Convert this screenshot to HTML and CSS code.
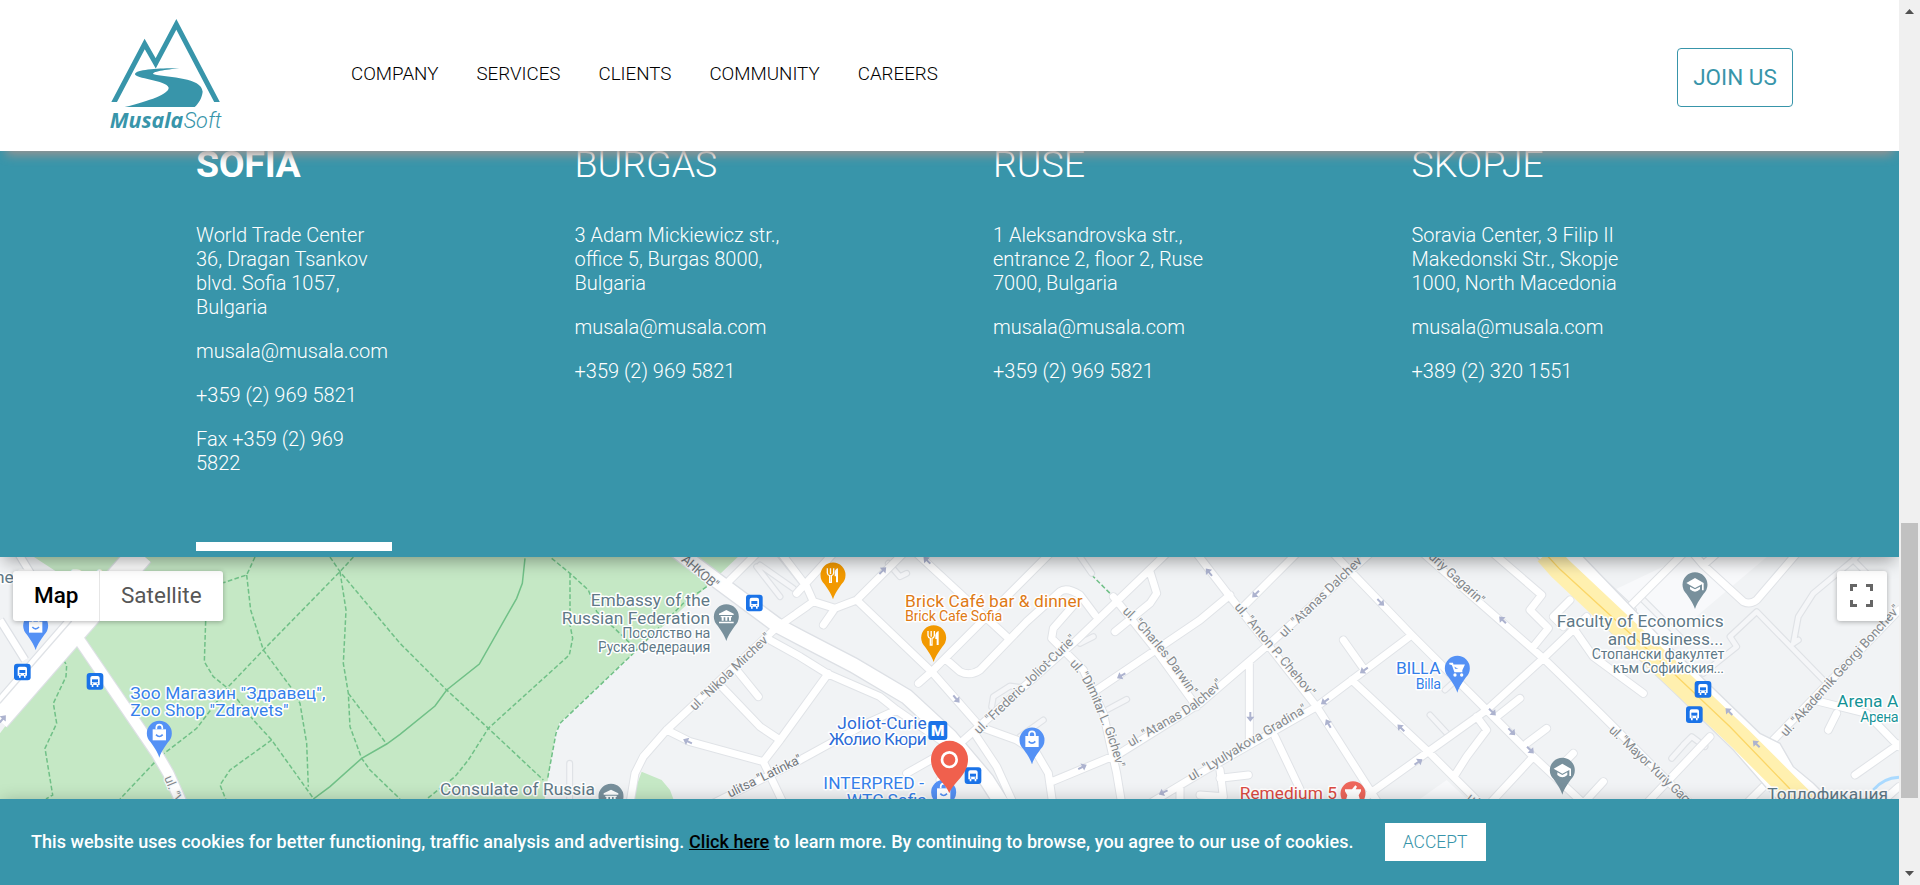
FILE: index.html
```html
<!DOCTYPE html>
<html lang="en">
<head>
<meta charset="utf-8">
<title>Musala Soft</title>
<link rel="stylesheet" href="styles.css">
</head>
<body>
<div class="page">
  <header class="header">
    <svg class="logo" viewBox="324 48 348 348" role="img" aria-label="MusalaSoft">
      <clipPath id="base"><rect x="324" y="48" width="348" height="258"/></clipPath>
      <path d="M334 322L434 132L467 190L529 73L661 325" fill="none" stroke="#3895aa" stroke-width="15" stroke-miterlimit="6" clip-path="url(#base)"/>
      <path d="M538 205C480 204 409 208 405 222C402 236 500 240 506 263C506 282 450 302 374 321H584C596 310 606 294 608 275C604 232 510 234 461 223C450 216 500 209 538 205Z" fill="#3895aa"/>
      <text x="329" y="384" class="logo-bold" textLength="221" lengthAdjust="spacingAndGlyphs">Musala</text>
      <text x="551" y="384" class="logo-light" textLength="114" lengthAdjust="spacingAndGlyphs">Soft</text>
    </svg>
    <nav class="nav">
      <a>COMPANY</a><a>SERVICES</a><a>CLIENTS</a><a>COMMUNITY</a><a>CAREERS</a>
    </nav>
    <a class="join">JOIN US</a>
  </header>

  <section class="offices">
    <article class="office active">
      <h2>SOFIA</h2>
      <p>World Trade Center<br>36, Dragan Tsankov<br>blvd. Sofia 1057,<br>Bulgaria</p>
      <p>musala@musala.com</p>
      <p>+359 (2) 969 5821</p>
      <p>Fax +359 (2) 969<br>5822</p>
    </article>
    <article class="office">
      <h2>BURGAS</h2>
      <p>3 Adam Mickiewicz str.,<br>office 5, Burgas 8000,<br>Bulgaria</p>
      <p>musala@musala.com</p>
      <p>+359 (2) 969 5821</p>
    </article>
    <article class="office">
      <h2>RUSE</h2>
      <p>1 Aleksandrovska str.,<br>entrance 2, floor 2, Ruse<br>7000, Bulgaria</p>
      <p>musala@musala.com</p>
      <p>+359 (2) 969 5821</p>
    </article>
    <article class="office">
      <h2>SKOPJE</h2>
      <p>Soravia Center, 3 Filip II<br>Makedonski Str., Skopje<br>1000, North Macedonia</p>
      <p>musala@musala.com</p>
      <p>+389 (2) 320 1551</p>
    </article>
  </section>

  <div class="map">
    <svg class="canvas" viewBox="0 51 5697 726">
      <defs>
        <g id="pin"><path d="M0 73C-7 52-16 42-26 27A37.500 37.500 0 1 1 26 27C16 42 7 52 0 73Z"/></g>
        <g id="bag"><use href="#pin" fill="#5491f5"/><path d="M-20-12H20V21H-20Z" fill="#fff"/><path d="M-9-12V-17A9 9 0 0 1 9-17V-12" fill="none" stroke="#fff" stroke-width="5"/><path d="M-10 4Q0 15 10 4" fill="none" stroke="#5491f5" stroke-width="5"/></g>
        <g id="museum"><use href="#pin" fill="#78909c"/><path d="M-22-9L0-20L22-9V-5H-22ZM-22 15H22V20H-22ZM-17-2H17V2H14V12H8V2H3V12H-3V2H-8V12H-14V2H-17Z" fill="#fff"/></g>
        <g id="grad"><use href="#pin" fill="#78909c"/><path d="M-26-5L0-20L26-5V17H21V-1L0 10ZM-15 6L0 14L15 6V14Q0 28-15 14Z" fill="#fff"/></g>
        <g id="food"><use href="#pin" fill="#f29900"/><path d="M-17-20V-6Q-16 1-10 2V22H-5V2Q1 1 2-6V-20M-7.500-20V-3" fill="none" stroke="#fff" stroke-width="4"/><path d="M15-20V22H9V4H5V-8Q7-19 15-20Z" fill="#fff"/></g>
        <g id="bus"><rect x="-25" y="-25" width="50" height="50" rx="9" fill="#1a73e8"/><path d="M-14-10Q-14-16-8-16H8Q14-16 14-10V11H10V17H5V11H-5V17H-10V11H-14Z" fill="#fff"/><path d="M-9-6H9V3H-9Z" fill="#1a73e8"/><circle cx="-7" cy="7" r="2" fill="#1a73e8"/><circle cx="7" cy="7" r="2" fill="#1a73e8"/></g>
        <path id="arrow" d="M-14-3H0V-12L15 0L0 12V3H-14Z" fill="#adb3cf"/>
        <g id="lanes" fill="none" stroke-linecap="round" stroke-linejoin="round">
          <path d="M2270 80L2340 170M2280 75L2380 145M2340 45L2400 120M1709 670V790M2665 70L2700 110L2720 100M3230 35L3275 100M3320 510L3380 478M2975 500L2980 470L3030 438L3060 442M3060 590L3130 540M3240 310L3280 290M4290 525L4350 590M4335 450L4390 400M5110 400L5210 320L5190 290L5270 215L5480 430M5380 310L5395 230L5440 160L5560 60L5600 20M5560 60L5610 110M5015 655L5055 610M5050 615L5075 590L5115 620M4740 60L4900 210M5380 310L5395 300M4930 180L5040 290"/>
        </g>
        <g id="streets" fill="none" stroke-linecap="round" stroke-linejoin="round">
          <path d="M2420 200L2330 262L2000 570L1930 650L1905 700L1890 790M2310 300L2400 350L2480 400L2640 470L2690 510L2850 620M2210 390L2275 470M2165 440L2280 560L2340 600M2000 570L2070 605L2290 665L2350 790M2485 400L2340 600L2290 665M2140 790L2400 660L2600 550L2690 510M2720 700L2880 610M2390 160L2500 40M2170 140L2270 40M2340 35L2420 140L2440 185L2505 205L2570 180L2710 40M2390 220L2440 185M2505 205L2470 255M2570 180L2795 395L2940 560L3050 600L3110 640L3145 700L3158 790M2755 430L2795 395L3150 40M2750 40L3020 290M2840 360L2880 395Q2910 410 2940 390L3080 245L3180 155Q3200 140 3240 165L3285 225M2880 610L3230 300L3500 40M3340 170L3460 320L3590 500M3450 95L3470 160L3450 190L3345 275M3230 185L3160 265L3155 295L3250 390L3310 520L3350 700L3365 790M3690 165L3600 240L3290 450M3155 725L3360 640L3600 490L3810 310L4110 40M3450 790L3600 700L3950 500L4235 285M3540 740V790M3590 40L3690 170L3950 500L4135 790M3890 40L3730 200M3748 365V610M4000 40L4235 285L4460 510L4600 650L4750 790M4270 40L4630 355L4800 520L5080 800M4030 300L4090 385M4055 420L4290 640L4440 790M4460 510L4110 760L4080 790M4460 510L4630 355L4760 230M3825 590L3920 790M3660 690L3670 770L3600 765M3660 715L3745 705M4400 450L4460 510M4490 530L4560 475M4580 610L4640 565M4600 650L4470 790M4690 670L4720 640M4430 530L4460 570L4400 650L4365 705M4480 40L4625 165L4590 210L4645 265L4600 320M4710 180L4660 230L4690 260M4880 210L5050 40M5080 40L5110 75L5230 185Q5250 195 5270 180L5390 40M5110 75L5150 40M5320 600L5697 210M5440 480L5600 520L5697 620M5510 520L5485 570M5697 612L5565 705M5130 590L4940 790M4710 250L4780 350L4930 460M4750 790L4810 725M5240 790L5290 740M5640 790L5697 740M2930 590L2990 680L3040 790M2820 720L2850 790"/>
        </g>
      </defs>
      <rect y="40" width="5697" height="750" fill="#f1f3f5"/>
      <path d="M85 40H2225L2120 140L1900 340L1678 550L1666 580L1632 790H0V580L300 180ZM1925 695L1985 720L2010 750L2025 790H1890Z" fill="#c5e8c5"/>
      <path d="M5050 51H5300L4970 330L4800 170ZM4260 777L4340 720L4400 777Z" fill="#f8f9fb"/>

      <g fill="none" stroke="#70c087" stroke-width="4.500">
        <g stroke-dasharray="14 7">
          <path d="M765 51L740 105L670 128M740 105L752 210L790 330L875 445L900 490L920 610L925 740M1060 51L1020 95L790 330L685 440L590 565L480 650L360 777M990 51L1020 95L1200 310L1340 450L1465 565L1630 720M1020 95L1038 210L1030 370L1045 460L1050 560L1085 655L1110 690L1200 777M1045 460L1160 612M617 243L613 365L640 410L690 450L760 540L815 600L940 775M815 600L690 690L660 735L677 777M190 360L200 375L198 410L160 490L170 550L135 625L158 765L138 777"/>
          <path d="M1655 55L1710 100L1765 150L1790 215L1870 290L1900 320M1710 100V255L1718 295L1708 345L1465 565L1405 660L1365 710L1280 777M2120 140L2050 190L1900 340L1680 550L1668 580L1642 720M3275 105L3340 170"/>
        </g>
        <path d="M1575 55L1567 130L1550 175L1438 372L1340 450L1305 498L1200 583L1160 612L1085 655L990 740L940 777"/>
      </g>

      <use href="#lanes" stroke="#dfe2e6" stroke-width="21"/>
      <use href="#lanes" stroke="#f5f6f8" stroke-width="14"/>
      <use href="#streets" stroke="#e0e3e7" stroke-width="27"/>
      <g fill="none" stroke="#dde0e5">
        <path d="M0 240L75 360M55 40L110 130" stroke-width="27"/>
        <path d="M422 40L-10 536" stroke-width="84"/>
        <path d="M238 300L470 640L505 700L545 790" stroke-width="38"/>
        <path d="M2020 25L2330 255L2400 292L2560 375L2720 470L2850 590L2960 720L3005 790" stroke-width="50"/>
      </g>
      <use href="#streets" stroke="#fff" stroke-width="21"/>
      <g fill="none" stroke="#fff">
        <path d="M0 240L75 360M55 40L110 130" stroke-width="20"/>
        <path d="M422 40L-10 536" stroke-width="77"/>
        <path d="M238 300L470 640L505 700L545 790" stroke-width="31"/>
        <path d="M2020 25L2330 255L2400 292L2560 375L2720 470L2850 590L2960 720L3005 790" stroke-width="42"/>
      </g>
      <path d="M215 243L0 490" fill="none" stroke="#dfe2e6" stroke-width="4"/>
      <path d="M4600 40L4840 285L5020 455L5200 630L5340 790H5500L5440 730L5380 680L5340 610L5280 580L4990 300L4740 40Z" fill="#fff" stroke="#dde0e5" stroke-width="4"/>
      <path d="M4640 40L4680 85L5010 395L5220 595L5420 795" fill="none" stroke="#fff0af" stroke-width="72"/>
      <path d="M4635 40L4680 88L5010 390L5190 560L5370 747" fill="none" stroke="#fbd667" stroke-width="4"/>
      <path d="M5620 750Q5650 714 5697 712" fill="none" stroke="#aadaff" stroke-width="9"/>

      <use href="#arrow" transform="translate(8 537) rotate(-50)"/>
      <use href="#arrow" transform="translate(2063 604) rotate(-155)"/>
      <use href="#arrow" transform="translate(2648 92) rotate(-45)"/>
      <use href="#arrow" transform="translate(2781 61) rotate(-135)"/>
      <use href="#arrow" transform="translate(2869 477) rotate(50)"/>
      <use href="#arrow" transform="translate(3247 681) rotate(-28)"/>
      <use href="#arrow" transform="translate(3364 407) rotate(150)"/>
      <use href="#arrow" transform="translate(3490 757) rotate(155)"/>
      <use href="#arrow" transform="translate(3627 97) rotate(-130)"/>
      <use href="#arrow" transform="translate(3767 162) rotate(135)"/>
      <use href="#arrow" transform="translate(3751 530) rotate(90)"/>
      <use href="#arrow" transform="translate(4142 187) rotate(45)"/>
      <use href="#arrow" transform="translate(4092 391) rotate(145)"/>
      <use href="#arrow" transform="translate(3975 484) rotate(145)"/>
      <use href="#arrow" transform="translate(3985 551) rotate(-120)"/>
      <use href="#arrow" transform="translate(4203 564) rotate(-135)"/>
      <use href="#arrow" transform="translate(4255 666) rotate(-35)"/>
      <use href="#arrow" transform="translate(4508 240) rotate(-135)"/>
      <use href="#arrow" transform="translate(4477 516) rotate(45)"/>
      <use href="#arrow" transform="translate(4535 575) rotate(45)"/>
      <use href="#arrow" transform="translate(4591 630) rotate(45)"/>
      <use href="#arrow" transform="translate(5187 515) rotate(-135)"/>
      <use href="#arrow" transform="translate(5269 612) rotate(-135)"/>

      <g class="street">
        <path id="gichev" d="M3208 372Q3262 425 3292 520Q3335 610 3350 692" fill="none" stroke="none"/>
        <path id="darwin" d="M3366 216Q3480 325 3572 468" fill="none" stroke="none"/>
        <path id="dalchev" d="M3392 621L3560 524Q3620 488 3682 420" fill="none" stroke="none"/>
        <text><textPath href="#gichev" textLength="345">ul. "Dimitar L. Gichev"</textPath></text>
        <text><textPath href="#darwin" textLength="325">ul. "Charles Darwin"</textPath></text>
        <text><textPath href="#dalchev" textLength="338">ul. "Atanas Dalchev"</textPath></text>
        <text class="major" transform="translate(2042 62) rotate(41)" textLength="132">АНКОВ"</text>
        <text transform="translate(2084 514) rotate(-43.500)" textLength="318">ul. "Nikola Mirchev"</text>
        <text class="major" transform="translate(2190 773) rotate(-26)" textLength="243">ulitsa "Latinka"</text>
        <text transform="translate(2937 584) rotate(-44)" textLength="408">ul. "Frederic Joliot-Curie"</text>
        <text transform="translate(3574 724) rotate(-31)" textLength="408">ul. "Lyulyakova Gradina"</text>
        <text transform="translate(3702 202) rotate(50)" textLength="352">ul. "Anton P. Chehov"</text>
        <text transform="translate(3853 294) rotate(-44)" textLength="340">ul. "Atanas Dalchev"</text>
        <text transform="translate(4268 38) rotate(42.500)" textLength="232">Yuriy Gagarin"</text>
        <text transform="translate(4398 778) rotate(40)" textLength="50">ul.</text>
        <text transform="translate(4825 573) rotate(43.500)" textLength="350">ul. "Mayor Yuriy Gagar</text>
        <text transform="translate(5358 592) rotate(-48)" textLength="515">ul. "Akademik Georgi Bonchev"</text>
        <text transform="translate(492 713) rotate(68)">ul. "V</text>
      </g>

      <use href="#bag" x="107" y="257"/>
      <use href="#bag" x="478" y="580"/>
      <use href="#bag" x="3096" y="600"/>
      <use href="#bag" x="2831" y="757"/>
      <use href="#museum" x="2179" y="230"/>
      <use href="#museum" x="1833" y="769"/>
      <use href="#grad" x="4687" y="691"/>
      <use href="#grad" x="5085" y="134"/>
      <use href="#food" x="2499" y="105"/>
      <use href="#food" x="2801" y="293"/>
      <g transform="translate(4372 385)"><use href="#pin" fill="#5491f5"/><path d="M-24-14H-15L-7 9H15M-11-9H19L13 4H-7" fill="#fff" stroke="#fff" stroke-width="5"/><circle cx="-7" cy="20" r="5" fill="#fff"/><circle cx="13" cy="20" r="5" fill="#fff"/></g>
      <g transform="translate(4059 761)"><use href="#pin" fill="#ee675c"/><path d="M-24-13H-3L7-25L12-21L8-13H24V-7L17 5L23 25H-23L-17 5L-24-7Z" fill="#fff"/></g>
      <use href="#bus" x="67" y="396"/>
      <use href="#bus" x="285" y="424"/>
      <use href="#bus" x="2263" y="189"/>
      <use href="#bus" x="2919" y="707"/>
      <use href="#bus" x="5109" y="448"/>
      <use href="#bus" x="5083" y="524"/>
      <rect x="2785" y="543" width="57" height="57" rx="9" fill="#1a73e8"/>
      <text x="2813" y="589" class="metro">M</text>
      <path d="M2848 760C2838 728 2793 706 2793 658A55.500 55.500 0 1 1 2904 658C2904 706 2858 728 2848 760Z" fill="#f0604d"/>
      <circle cx="2848" cy="659" r="22" fill="none" stroke="#fff" stroke-width="8"/>

      <g class="poi">
        <g fill="#607987">
          <text x="1772" y="199" textLength="358">Embassy of the</text>
          <text x="1685" y="251" textLength="445">Russian Federation</text>
          <text x="1867" y="295" class="sub" textLength="264">Посолство на</text>
          <text x="1794" y="336" class="sub" textLength="337">Руска Федерация</text>
          <text x="1320" y="765" textLength="465">Consulate of Russia</text>
          <text x="-46" y="128">The Brown Barber Shop</text>
          <text x="4670" y="262" textLength="501">Faculty of Economics</text>
          <text x="4823" y="314" textLength="347">and Business...</text>
          <text x="4775" y="357" class="sub" textLength="398">Стопански факултет</text>
          <text x="4838" y="399" class="sub" textLength="334">към Софийския...</text>
          <text x="5302" y="780" textLength="362">Топлофикация</text>
        </g>
        <g fill="#3580ea">
          <text x="391" y="477" textLength="585">Зоо Магазин "Здравец",</text>
          <text x="391" y="528" textLength="475">Zoo Shop "Zdravets"</text>
          <text x="4188" y="402" textLength="134">BILLA</text>
          <text x="4247" y="446" class="sub" textLength="76">Billa</text>
          <text x="2470" y="746" textLength="302">INTERPRED -</text>
          <text x="2540" y="798" textLength="240">WTC Sofia</text>
        </g>
        <g fill="#2b6cd8">
          <text x="2512" y="566" textLength="268">Joliot-Curie</text>
          <text x="2486" y="616" textLength="294">Жолио Кюри</text>
        </g>
        <g fill="#de7a16">
          <text x="2715" y="200" textLength="533">Brick Café bar &amp; dinner</text>
          <text x="2715" y="243" class="sub" textLength="292">Brick Cafe Sofia</text>
        </g>
        <text x="3719" y="777" fill="#dc4a42" textLength="292">Remedium 5</text>
        <g fill="#159397">
          <text x="5511" y="502" textLength="184">Arena A</text>
          <text x="5581" y="546" class="sub" textLength="115">Арена</text>
        </g>
      </g>
    </svg>
    <div class="map-type"><span class="on">Map</span><span>Satellite</span></div>
    <div class="full">
      <svg viewBox="0 0 23 23"><path d="M1.500 7V1.500H7M16 1.500H21.500V7M21.500 16V21.500H16M7 21.500H1.500V16" fill="none" stroke="#666" stroke-width="3"/></svg>
    </div>
  </div>

  <div class="cookies">
    <p>This website uses cookies for better functioning, traffic analysis and advertising. <a>Click here</a> to learn more. By continuing to browse, you agree to our use of cookies.</p>
    <button>ACCEPT</button>
  </div>
</div>
<div class="scroll">
  <svg viewBox="0 0 9 5"><path d="M0 5L4.500 0L9 5Z" fill="#505050"/></svg>
  <div class="thumb"></div>
  <svg viewBox="0 0 9 5"><path d="M0 0L4.500 5L9 0Z" fill="#505050"/></svg>
</div>
</body>
</html>
```
FILE: styles.css
```css
* { box-sizing: border-box; }
body {
  margin: 0;
  height: 885px;
  display: flex;
  overflow: hidden;
  font-family: Roboto, "Liberation Sans", sans-serif;
}
h2, p { margin: 0; }
.page { width: 1899px; display: flex; flex-direction: column; overflow: hidden; }

.header {
  height: 151px;
  flex: none;
  position: relative;
  z-index: 2;
  display: flex;
  align-items: flex-start;
  padding: 16px 106px 0 108px;
  background: #fff;
  box-shadow: 0 10px 10px -6px #9b9390;
}
.logo { width: 116px; height: 116px; }
.logo-bold, .logo-light { font-style: italic; font-size: 66px; fill: #3895aa; }
.logo-bold { font-family: "Open Sans", sans-serif; font-weight: 700; }
.logo-light { font-family: Roboto, sans-serif; font-weight: 300; }
.nav { display: flex; gap: 38px; margin: 46px 0 0 127px; }
.nav a { font-size: 18.75px; line-height: 25px; font-weight: 300; color: #000; }
.join {
  margin: 32px 0 0 auto;
  width: 116px;
  height: 59px;
  border: 1px solid #3895aa;
  border-radius: 4px;
  color: #3895aa;
  font-size: 22.5px;
  line-height: 57px;
  text-align: center;
}

.offices {
  height: 406px;
  flex: none;
  position: relative;
  z-index: 1;
  display: grid;
  grid-template-columns: 378.5px 418.5px 418.5px 1fr;
  padding-left: 196px;
  background: #3895aa;
  color: #fff;
  box-shadow: 0 8px 16px -4px rgba(0, 0, 0, .35);
}
.office { margin-top: -8px; font-size: 20px; line-height: 24px; font-weight: 300; white-space: nowrap; }
.office h2 { font-size: 37.5px; line-height: 43px; font-weight: 300; margin-bottom: 37px; }
.office.active h2 { font-weight: 700; letter-spacing: -.3px; }
.office p { margin-bottom: 20px; }
.active { width: 196px; height: 408px; border-bottom: 9px solid #fff; }

.map { height: 242px; flex: none; position: relative; overflow: hidden; }
.canvas { display: block; width: 1899px; height: 242px; }
.canvas text { font-family: Roboto, sans-serif; }
.street text { font-size: 39px; fill: #85898d; stroke: #f8f9fa; stroke-width: 7px; paint-order: stroke; stroke-linejoin: round; }
.street .major { fill: #72777c; }
.poi text { font-size: 52px; stroke: #fff; stroke-width: 9px; paint-order: stroke; stroke-linejoin: round; }
.poi .sub { font-size: 43px; }
.canvas .metro { font-size: 46px; font-weight: 900; fill: #fff; text-anchor: middle; }
.map-type, .full { position: absolute; top: 14px; height: 50px; background: #fff; border-radius: 3px; box-shadow: 0 1px 5px rgba(0, 0, 0, .3); }
.map-type { left: 13px; display: flex; width: 210px; font-size: 22.5px; line-height: 48px; color: #565656; }
.map-type span { padding-left: 21px; }
.map-type .on { width: 87px; color: #000; font-weight: 500; border-right: 1px solid #e6e6e6; }
.full { right: 12px; width: 50px; padding: 13px; }
.full svg { display: block; width: 23px; height: 23px; }

.cookies {
  height: 86px;
  flex: none;
  position: relative;
  z-index: 1;
  display: flex;
  align-items: center;
  gap: 31px;
  padding: 0 0 1px 31px;
  background: #3895aa;
  color: #fff;
  font-size: 18px;
  font-weight: 500;
  letter-spacing: .063px;
  white-space: nowrap;
  box-shadow: 0 0 16px -2px rgba(0, 0, 0, .25);
}
.cookies a { color: #000; text-decoration: underline; }
.cookies button { width: 101px; height: 38px; border: 0; padding: 0; background: #fff; color: #3895aa; font: 300 17.5px Roboto, sans-serif; }

.scroll {
  width: 21px;
  flex: none;
  display: flex;
  flex-direction: column;
  align-items: center;
  padding: 9px 0 9px;
  background: #f0f0f0;
}
.scroll svg { width: 9px; height: 5px; }
.thumb { width: 17px; height: 275px; margin: 509px 0 auto; background: #c1c1c1; }
```
